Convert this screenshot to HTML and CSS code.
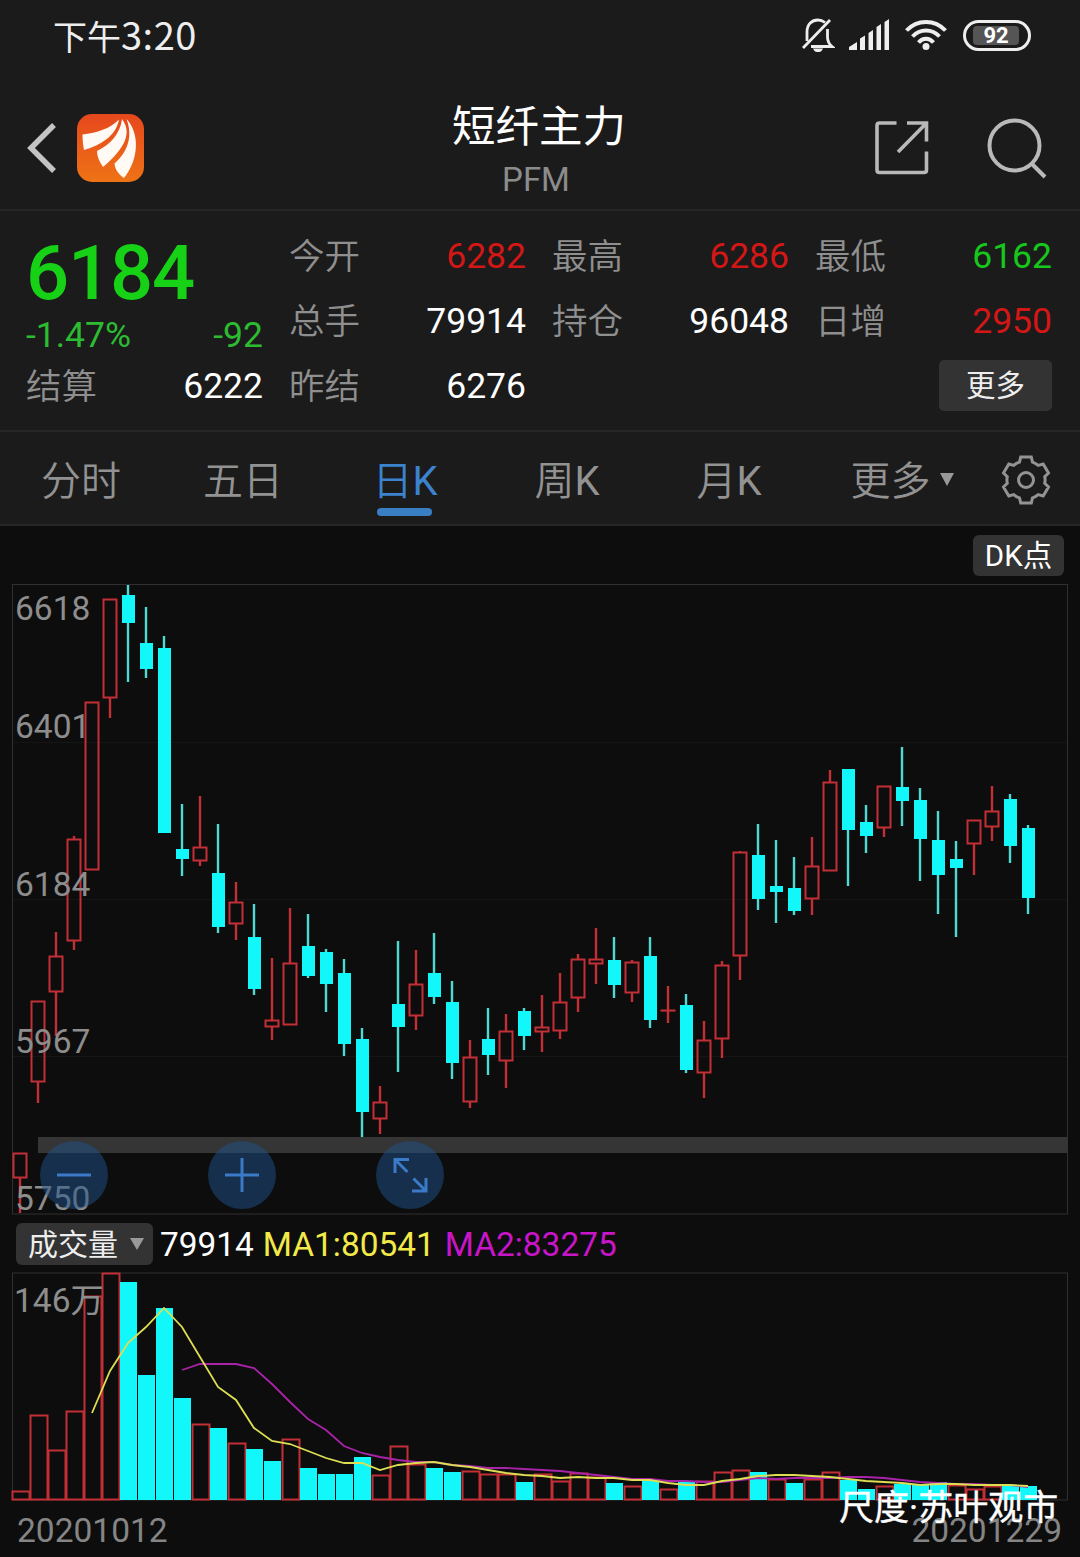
FILE: index.html
```
<!DOCTYPE html>
<html lang="zh-CN">
<head>
    <meta charset="UTF-8">
    <meta name="viewport" content="width=device-width, initial-scale=1.0">
    <title>短纤主力 PFM</title>
    <link rel="stylesheet" href="styles.css">
</head>
<body>
    <div class="status-bar">
        <div class="time">下午<span>3:20</span></div>
        <div class="status-icons">
            <svg class="bell" width="34" height="36" viewBox="0 0 34 36" fill="none" stroke="#eee" stroke-width="2.8">
                <path d="M6 24 V15 C6 7 11 3 17 3 C19.5 3 22 4 24 5.5 M26.5 12 V20 C26.5 24 28 27 31 29.5 H10"/>
                <path d="M2 31 L29 3"/>
                <path d="M12 31.5 H22 C21 34.5 19 35 17 35 C15 35 13 34.5 12 31.5Z" fill="#eee" stroke="none"/>
            </svg>
            <svg class="signal" width="41" height="32" viewBox="0 0 41 32" fill="#eee">
                <path d="M0 31 V28 L8 23 V31Z M11 31 V19.500 L16 16.500 V31Z M19.500 31 V14 L24 11 V31Z M27.500 31 V8 L32 5 V31Z M35.500 31 V3 L40 0 V31Z"/>
            </svg>
            <svg class="wifi" width="42" height="32" viewBox="0 0 42 32" fill="none" stroke="#eee" stroke-width="4">
                <path d="M1.500 11.500 C12 0 30 0 40.500 11.500"/>
                <path d="M7.500 17.500 C15 9.500 27 9.500 34.500 17.500"/>
                <path d="M13.500 23.500 C18 18.500 24 18.500 28.500 23.500"/>
                <circle cx="21" cy="27.500" r="3.500" fill="#eee" stroke="none"/>
            </svg>
            <div class="battery"><span>92</span></div>
        </div>
    </div>

    <div class="header">
        <svg class="back" width="30" height="52" viewBox="0 0 30 52" fill="none" stroke="#c4c4c4" stroke-width="5.500">
            <path d="M27 3 L4 26 L27 49"/>
        </svg>
        <svg class="logo" width="67" height="68" viewBox="0 0 67 68">
            <defs>
                <linearGradient id="logoBg" x1="0" y1="0" x2="0" y2="1">
                    <stop offset="0" stop-color="#e6481d"/>
                    <stop offset="1" stop-color="#ee7316"/>
                </linearGradient>
            </defs>
            <rect width="67" height="68" rx="15" fill="url(#logoBg)"/>
            <g fill="#fffaf4">
                <path d="M5.500 20.500 C20 18.500 33 15 42 5.500 C39 22 24 31 7 36 C6 31 5.500 26 5.500 20.500Z"/>
                <path d="M45 5 C58 22 41 40 26 53 C22 47 20 42 20 37 C34 30 43 20 45 5Z"/>
                <path d="M49.500 5 C62 18 63 44 47 64 C41 60 38 55 37.500 49.500 C51 38 56 22 49.500 5Z"/>
            </g>
        </svg>
        <div class="title">
            <h1>短纤主力</h1>
            <p>PFM</p>
        </div>
        <svg class="share" width="54" height="56" viewBox="0 0 54 56" fill="none" stroke="#b9b9b9" stroke-width="3.600">
            <path d="M21.500 3 H4.500 Q2 3 2 5.500 V50 Q2 52.500 4.500 52.500 H49 Q51.500 52.500 51.500 50 V31.500"/>
            <path d="M32 3 H51.500 V21.500 M51 3.500 L23 32"/>
        </svg>
        <svg class="search" width="60" height="62" viewBox="0 0 60 62" fill="none" stroke="#b9b9b9" stroke-width="4">
            <circle cx="27.500" cy="28.500" r="25"/>
            <path d="M44.500 46.500 L58 60"/>
        </svg>
    </div>

    <div class="quote">
        <div class="price">
            <strong>6184</strong>
            <div class="change"><span>-1.47%</span><span>-92</span></div>
        </div>
        <div class="cell"><label>今开</label><b class="up">6282</b></div>
        <div class="cell"><label>最高</label><b class="up">6286</b></div>
        <div class="cell"><label>最低</label><b class="down">6162</b></div>
        <div class="cell"><label>总手</label><b>79914</b></div>
        <div class="cell"><label>持仓</label><b>96048</b></div>
        <div class="cell"><label>日增</label><b class="up">2950</b></div>
        <div class="cell"><label>结算</label><b>6222</b></div>
        <div class="cell"><label>昨结</label><b>6276</b></div>
        <button class="more">更多</button>
    </div>

    <div class="tabs">
        <span class="tab">分时</span>
        <span class="tab">五日</span>
        <span class="tab active">日<b>K</b></span>
        <span class="tab">周<b>K</b></span>
        <span class="tab">月<b>K</b></span>
        <span class="tab">更多<i class="arrow"></i></span>
        <svg class="gear" width="50" height="50" viewBox="-25 -25 50 50" fill="none" stroke="#939393" stroke-width="3">
            <path d="M-5.300 -22.900 H5.300 L6.500 -17.900 Q9.500 -17 12.200 -14.600 L17.200 -16 L22.500 -6.900 L18.700 -3.300 Q19.500 0 18.700 3.300 L22.500 6.900 L17.200 16 L12.200 14.600 Q9.500 17 6.500 17.900 L5.300 22.900 H-5.300 L-6.500 17.900 Q-9.500 17 -12.200 14.600 L-17.200 16 L-22.500 6.900 L-18.700 3.300 Q-19.500 0 -18.700 -3.300 L-22.500 -6.900 L-17.200 -16 L-12.200 -14.600 Q-9.500 -17 -6.500 -17.900 Z"/>
            <circle r="7.500"/>
        </svg>
    </div>

    <div class="chart-top"><button class="dk">DK点</button></div>

    <div class="k-chart">
        <svg id="kline" width="1080" height="631" viewBox="0 584 1080 631"></svg>
        <span class="axis a1">6618</span>
        <span class="axis a2">6401</span>
        <span class="axis a3">6184</span>
        <span class="axis a4">5967</span>
        <span class="axis a5">5750</span>
        <div class="scrollbar"></div>
        <div class="zoom-buttons">
            <svg width="68" height="68" viewBox="-34 -34 68 68"><path d="M-17 0 H17"/></svg>
            <svg width="68" height="68" viewBox="-34 -34 68 68"><path d="M-17 0 H17 M0 -17 V17"/></svg>
            <svg width="68" height="68" viewBox="-34 -34 68 68"><path d="M-15 -2 V-15.500 H-1 M-15 -15.500 L-2.500 -3 M16 3 V16 H2 M16 16 L3.500 3.500"/></svg>
        </div>
    </div>

    <div class="volume-bar">
        <button class="indicator">成交量<i class="arrow"></i></button>
        <span class="vol">79914</span>
        <span class="ma1">MA1:80541</span>
        <span class="ma2">MA2:83275</span>
    </div>

    <div class="v-chart">
        <svg id="volume" width="1080" height="230" viewBox="0 1272 1080 230"></svg>
        <span class="axis">146万</span>
    </div>

    <div class="dates">
        <span>20201012</span>
        <span>20201229</span>
        <div class="watermark">尺度·苏叶观市</div>
    </div>

    <script src="chart.js"></script>
</body>
</html>
```
FILE: styles.css
```
* { box-sizing: border-box; margin: 0; padding: 0; }
body { width: 1080px; height: 1557px; overflow: hidden; background: #0d0d0e; color: #fff; font-family: Roboto, "Noto Sans CJK SC", sans-serif; }
svg { display: block; flex: none; }
button { border: none; color: #eee; font-family: inherit; background: #333334; }

.status-bar { height: 75px; padding: 0 49px 5px 53px; display: flex; justify-content: space-between; align-items: center; background: #1b1b1b; }
.time { font-family: "Noto Sans CJK SC", sans-serif; font-size: 34px; line-height: 50px; color: #eee; }
.time span { font-size: 38px; letter-spacing: 0.5px; }
.status-icons { display: flex; align-items: center; }
.signal { margin-left: 14px; }
.wifi { margin-left: 15px; }
.battery { width: 68px; height: 31px; margin-left: 16px; padding: 3px 7px; border: 3px solid #eee; border-radius: 16px; }
.battery span { display: block; width: 46px; height: 19px; background: #555; border-radius: 4px; font-size: 22px; font-weight: bold; line-height: 20px; text-align: center; }

.header { height: 136px; display: flex; align-items: center; padding: 12px 33px 0 27px; background: #1b1b1b; border-bottom: 2px solid #262626; }
.logo { margin-left: 20px; }
.title { width: 200px; margin-left: 292px; text-align: center; }
.title h1 { font-size: 43.500px; font-weight: 400; line-height: 60px; height: 60px; margin: 1px 0 0 7px; }
.title p { font-size: 33px; line-height: 40px; color: #8c8c8c; padding: 2px 0 0 1px; }
.share { margin-left: 240px; }
.search { margin-left: 58px; }

.quote { height: 221px; padding: 12px 28px 0 26px; display: grid; grid-template-columns: repeat(4, 237px); grid-template-rows: repeat(3, 65px); column-gap: 26px; background: #1b1b1b; border-bottom: 2px solid #262626; }
.price { grid-row: span 2; color: #17d117; }
.price strong { display: block; font-size: 76px; font-weight: 500; line-height: 88px; height: 91px; padding-top: 6px; letter-spacing: -1.200px; }
.change { display: flex; justify-content: space-between; font-size: 35.500px; line-height: 43px; color: #2dbb32; }
.cell { display: flex; justify-content: space-between; align-items: center; font-size: 35.500px; }
.cell label { position: relative; top: -2px; font-weight: 350; color: #8f8f8f; }
.cell b { font-weight: 400; }
.cell .up { color: #d31616; }
.cell .down { color: #17c81c; }
.more { grid-column: 4; justify-self: end; align-self: center; width: 113px; height: 51px; padding-bottom: 6px; border-radius: 5px; font-size: 29.500px; }

.tabs { height: 94px; display: grid; grid-template-columns: repeat(5, 162px) 191px 50px; align-items: center; background: #1b1b1b; border-bottom: 2px solid #272727; }
.tab { position: relative; padding-top: 7px; text-align: center; font-size: 40px; font-weight: 350; line-height: 85px; color: #929292; }
.tab b { font-weight: 400; }
.tab:nth-child(6) { padding-right: 7px; }
.active { color: #3b82cf; }
.active::after { content: ""; position: absolute; left: 53px; bottom: 8px; width: 55px; height: 8px; border-radius: 4px; background: #3a7fc4; }
.gear { margin-top: 3px; }
.arrow { display: inline-block; border-left: 7px solid transparent; border-right: 7px solid transparent; border-top: 13px solid #999; margin-left: 9px; vertical-align: 9px; }

.chart-top { height: 58px; padding: 9px 16px 0 0; text-align: right; }
.dk { width: 91px; height: 41px; border-radius: 6px; font-size: 29.500px; line-height: 34px; color: #fff; }

.k-chart { position: relative; height: 631px; }
.axis { position: absolute; left: 15px; font-size: 33.500px; line-height: 40px; color: #8d8d8d; }
.a1 { top: 5px; }
.a2 { top: 123px; }
.a3 { top: 281px; }
.a4 { top: 438px; }
.a5 { top: 595px; }
.scrollbar { position: absolute; left: 38px; right: 12px; top: 553px; height: 16px; background: #353535; }
.zoom-buttons { position: absolute; left: 40px; top: 557px; display: flex; gap: 100px; }
.zoom-buttons svg { border-radius: 50%; background: rgba(31, 82, 138, 0.5); fill: none; stroke: #3b7ac8; stroke-width: 3; }

.volume-bar { height: 57px; padding: 1px 16px 0; display: flex; align-items: center; font-size: 33.400px; }
.indicator { width: 137px; height: 42px; border-radius: 6px; font-size: 30px; line-height: 34px; text-align: left; padding: 1px 0 0 12px; white-space: nowrap; }
.indicator .arrow { margin-left: 12px; vertical-align: 5px; border-top-width: 12px; }
.vol { margin-left: 7px; }
.ma1 { margin-left: 9px; color: #f2ea48; }
.ma2 { margin-left: 10px; color: #c815c8; }

.v-chart { position: relative; height: 230px; }
.v-chart .axis { left: 14px; top: 9px; }

.dates { position: relative; display: flex; justify-content: space-between; height: 55px; padding: 9px 18px 0 17px; font-size: 33.500px; line-height: 40px; color: #858585; }
.watermark { position: absolute; left: 839px; top: -18px; font-size: 35px; line-height: 50px; color: #fff; white-space: nowrap; -webkit-text-stroke: 0.4px #fff; }
```
FILE: chart.js
```
const RED = '#c22f34';
const CYAN = '#12f7f9';
const STEP = 18;
const FIRST = 20;

// high, body top, body bottom, low, volume top, volume rising, candle rising (if it differs)
const days = [
    [1153, 1153, 1178, 1213, 1491, 1], [1001, 1001, 1082, 1103, 1415, 1], [932, 956, 992, 1036, 1450, 1],
    [836, 839, 941, 950, 1411, 1], [702, 702, 870, 870, 1296, 1], [599, 599, 698, 718, 1273, 1],
    [585, 595, 623, 682, 1282, 0], [607, 643, 669, 678, 1375, 0], [636, 648, 833, 833, 1308, 0],
    [804, 849, 859, 876, 1398, 0], [796, 847, 861, 866, 1424, 1], [824, 873, 927, 933, 1428, 0],
    [882, 902, 924, 940, 1443, 1], [904, 937, 989, 995, 1449, 0], [958, 1020, 1027, 1040, 1461, 0, 1],
    [908, 963, 1025, 1025, 1439, 1], [914, 946, 976, 978, 1468, 0], [949, 952, 984, 1012, 1474, 0],
    [959, 973, 1044, 1056, 1474, 0], [1028, 1039, 1112, 1137, 1457, 0], [1086, 1102, 1119, 1134, 1475, 1],
    [941, 1004, 1027, 1072, 1446, 1, 0], [950, 984, 1016, 1030, 1464, 1], [933, 973, 997, 1004, 1468, 0],
    [981, 1002, 1063, 1079, 1472, 0], [1040, 1057, 1102, 1108, 1471, 1], [1008, 1039, 1055, 1075, 1474, 1, 0],
    [1014, 1031, 1061, 1088, 1474, 1], [1008, 1011, 1036, 1050, 1482, 0], [995, 1027, 1032, 1052, 1474, 1],
    [973, 1002, 1031, 1039, 1481, 1], [954, 959, 998, 1012, 1473, 1], [928, 959, 964, 984, 1477, 1],
    [937, 960, 985, 998, 1483, 0], [960, 962, 993, 1002, 1486, 1], [937, 956, 1020, 1028, 1480, 0],
    [986, 1010, 1011, 1023, 1489, 1], [994, 1005, 1070, 1073, 1482, 0], [1021, 1040, 1073, 1098, 1481, 1],
    [961, 965, 1039, 1058, 1472, 1], [851, 852, 956, 980, 1470, 1], [824, 855, 899, 910, 1472, 0],
    [840, 886, 892, 923, 1479, 1, 0], [857, 888, 911, 915, 1483, 0], [837, 866, 899, 915, 1479, 1],
    [770, 782, 871, 871, 1472, 1], [769, 769, 830, 886, 1480, 0], [805, 822, 836, 853, 1489, 0],
    [786, 786, 828, 837, 1486, 1], [747, 787, 801, 826, 1484, 0], [788, 800, 839, 881, 1484, 0],
    [811, 840, 875, 914, 1482, 0], [841, 859, 868, 937, 1485, 1, 0], [820, 820, 844, 875, 1489, 1],
    [786, 811, 827, 841, 1486, 1], [794, 799, 846, 863, 1485, 0], [825, 828, 898, 914, 1486, 0]
];

const ma1 = [1413, 1371, 1343, 1327, 1308, 1327, 1357, 1387, 1400, 1428, 1441, 1444, 1451, 1458, 1463, 1463, 1470, 1465, 1463, 1462, 1465, 1467, 1470, 1473, 1475, 1476, 1478, 1477, 1478, 1478, 1480, 1480, 1483, 1485, 1485, 1481, 1479, 1476, 1475, 1475, 1476, 1477, 1479, 1481, 1482, 1483, 1485, 1484, 1484, 1485, 1485, 1485, 1486];
const ma2 = [1370, 1364, 1364, 1364, 1368, 1384, 1402, 1419, 1430, 1446, 1453, 1457, 1460, 1462, 1462, 1465, 1466, 1468, 1468, 1469, 1470, 1471, 1473, 1475, 1477, 1479, 1479, 1481, 1481, 1482, 1482, 1480, 1478, 1479, 1478, 1478, 1478, 1477, 1477, 1478, 1480, 1482, 1483, 1484, 1484, 1485, 1485, 1487];

function box(x, y, w, h, fill, stroke) {
    return `<rect x="${x}" y="${y}" width="${w}" height="${h}" fill="${fill}" stroke="${stroke}" stroke-width="2"/>`;
}

function wick(x, y1, y2, color) {
    return y2 > y1 ? `<path d="M${x} ${y1} V${y2}" stroke="${color}" stroke-width="2.4"/>` : '';
}

function line(values, start, color) {
    const points = values.map((y, i) => `${FIRST + (start + i) * STEP},${y}`).join(' ');
    return `<polyline points="${points}" fill="none" stroke="${color}" stroke-width="1.8"/>`;
}

function drawCandles() {
    let out = '<rect x="12.5" y="584.5" width="1055" height="629.5" fill="none" stroke="#303030"/>';
    out += '<path d="M13 742.5 H1067 M13 899.5 H1067 M13 1056.5 H1067" stroke="#151515"/>';
    days.forEach((d, i) => {
        const [high, top, bottom, low, , volUp, up = volUp] = d;
        const x = FIRST + i * STEP;
        const color = up ? RED : '#50d9d2';
        out += wick(x, high, top, color) + wick(x, bottom, low, color);
        out += up
            ? box(x - 6.5, top + 0.5, 13, Math.max(bottom - top - 1, 0.1), 'none', RED)
            : `<rect x="${x - 6}" y="${top}" width="13" height="${bottom - top}" fill="${CYAN}"/>`;
    });
    document.getElementById('kline').innerHTML = out;
}

function drawVolume() {
    let out = '<rect x="12.5" y="1273" width="1055" height="227" fill="none" stroke="#303030"/>';
    days.forEach((d, i) => {
        const x = 11.5 + i * STEP;
        out += d[5]
            ? box(x + 1, d[4] + 0.5, 17, 1499 - d[4], 'none', RED)
            : `<rect x="${x + 0.5}" y="${d[4]}" width="17" height="${1500 - d[4]}" fill="${CYAN}"/>`;
    });
    out += line(ma2, 9, '#a823a8') + line(ma1, 4, '#dede52');
    document.getElementById('volume').innerHTML = out;
}

drawCandles();
drawVolume();
```
